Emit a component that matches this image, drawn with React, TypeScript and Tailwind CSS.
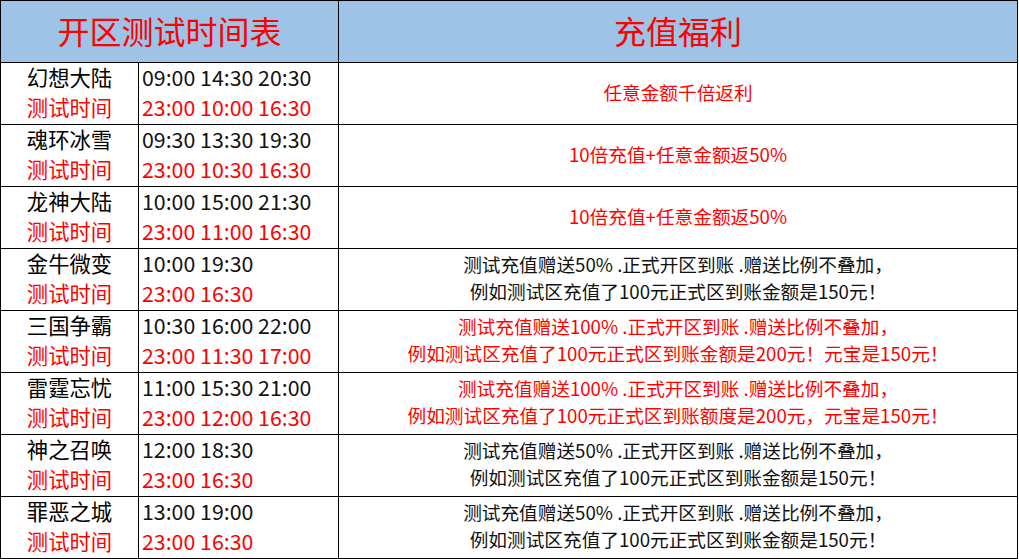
import React from "react";

const font = { fontFamily: '"Noto Sans CJK SC", "Noto Sans", sans-serif' };

type Row = {
  name: string;
  open: string;
  test: string;
  bonus: string[];
  red: boolean;
};

const rows: Row[] = [
  { name: "幻想大陆", open: "09:00 14:30 20:30", test: "23:00 10:00 16:30", bonus: ["任意金额千倍返利"], red: true },
  { name: "魂环冰雪", open: "09:30 13:30 19:30", test: "23:00 10:30 16:30", bonus: ["10倍充值+任意金额返50%"], red: true },
  { name: "龙神大陆", open: "10:00 15:00 21:30", test: "23:00 11:00 16:30", bonus: ["10倍充值+任意金额返50%"], red: true },
  {
    name: "金牛微变",
    open: "10:00 19:30",
    test: "23:00 16:30",
    bonus: ["测试充值赠送50% .正式开区到账 .赠送比例不叠加，", "例如测试区充值了100元正式区到账金额是150元！"],
    red: false,
  },
  {
    name: "三国争霸",
    open: "10:30 16:00 22:00",
    test: "23:00 11:30 17:00",
    bonus: ["测试充值赠送100% .正式开区到账 .赠送比例不叠加，", "例如测试区充值了100元正式区到账金额是200元！元宝是150元！"],
    red: true,
  },
  {
    name: "雷霆忘忧",
    open: "11:00 15:30 21:00",
    test: "23:00 12:00 16:30",
    bonus: ["测试充值赠送100% .正式开区到账 .赠送比例不叠加，", "例如测试区充值了100元正式区到账额度是200元，元宝是150元！"],
    red: true,
  },
  {
    name: "神之召唤",
    open: "12:00 18:30",
    test: "23:00 16:30",
    bonus: ["测试充值赠送50% .正式开区到账 .赠送比例不叠加，", "例如测试区充值了100元正式区到账金额是150元！"],
    red: false,
  },
  {
    name: "罪恶之城",
    open: "13:00 19:00",
    test: "23:00 16:30",
    bonus: ["测试充值赠送50% .正式开区到账 .赠送比例不叠加，", "例如测试区充值了100元正式区到账金额是150元！"],
    red: false,
  },
];

export default function App() {
  return (
    <div className="bg-white w-[1019px] h-[559px]" style={font}>
      <div className="w-[1018px] grid grid-cols-[138px_200px_679px] border-t border-l border-black">
        {/* Header */}
        <div className="col-span-2 h-[62px] pb-[4px] bg-[#9dc3e6] border-r border-b border-black flex items-center justify-center text-[32px] text-[#ff0000] leading-none">
          开区测试时间表
        </div>
        <div className="h-[62px] pb-[4px] bg-[#9dc3e6] border-r border-b border-black flex items-center justify-center text-[32px] text-[#ff0000] leading-none">
          充值福利
        </div>

        {rows.map((r) => (
          <React.Fragment key={r.name}>
            <div className="h-[62px] pb-[4px] border-r border-b border-black flex flex-col justify-center items-center text-[21.33px] leading-[30px]">
              <span className="text-black">{r.name}</span>
              <span className="text-[#ff0000]">测试时间</span>
            </div>
            <div className="h-[62px] pb-[4px] border-r border-b border-black flex flex-col justify-center pl-[3px] text-[21.33px] leading-[30px]">
              <span className="text-[#111]">{r.open}</span>
              <span className="text-[#ff0000]">{r.test}</span>
            </div>
            <div
              className={
                "h-[62px] pb-[5px] border-r border-b border-black flex flex-col justify-center items-center text-[18.67px] leading-[27px] " +
                (r.red ? "text-[#ff0000]" : "text-[#111]")
              }
            >
              {r.bonus.map((b) => (
                <span key={b}>{b}</span>
              ))}
            </div>
          </React.Fragment>
        ))}
      </div>
    </div>
  );
}
